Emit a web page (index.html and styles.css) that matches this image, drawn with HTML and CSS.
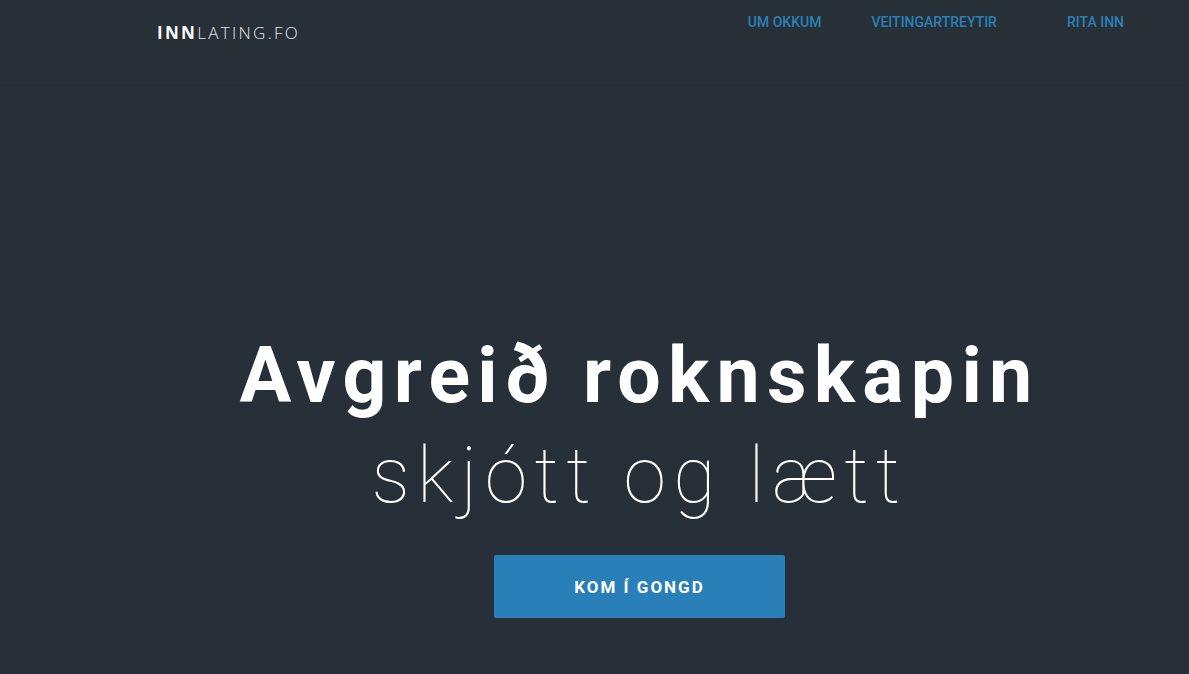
FILE: index.html
```html
<!DOCTYPE html>
<html lang="fo">
<head>
    <meta charset="UTF-8">
    <meta name="viewport" content="width=device-width, initial-scale=1.0">
    <title>Innlating.fo</title>
    <link rel="stylesheet" href="styles.css">
</head>
<body>
    <header class="topbar">
        <a class="logo" href="#"><strong>INN</strong>LATING.FO</a>
        <nav class="menu">
            <a href="#" class="menu-item">UM OKKUM</a>
            <a href="#" class="menu-item">VEITINGARTREYTIR</a>
            <a href="#" class="menu-item">RITA INN</a>
        </nav>
    </header>

    <section class="hero">
        <h1 class="hero-title">Avgreið roknskapin</h1>
        <p class="hero-sub">skjótt og lætt</p>
        <a href="#" class="hero-button">KOM Í GONGD</a>
    </section>
</body>
</html>
```

FILE: styles.css
```css
body {
    margin: 0;
    background-color: #272f38;
    color: #fff;
    font-family: Roboto, "Liberation Sans", sans-serif;
    height: 674px;
    overflow: hidden;
}
a {
    text-decoration: none;
}
.topbar {
    height: 80px;
    border-bottom: 1px solid #242b33;
    background-color: #272f37;
    display: flex;
    align-items: flex-start;
    padding: 0 0 0 157px;
}
.logo {
    margin-top: 21px;
    color: #e4e6e8;
    font-family: "Open Sans", sans-serif;
    font-weight: 300;
    font-size: 17px;
    letter-spacing: 2.3px;
}
.logo strong {
    font-weight: 700;
    color: #fff;
}
.menu {
    margin-left: auto;
    display: flex;
    padding-top: 14px;
    padding-right: 65px;
}
.menu-item {
    color: #2980b9;
    font-size: 14px;
    font-weight: 500;
    margin-left: 50px;
}
.menu-item:last-child {
    margin-left: 70px;
}
.hero {
    display: flex;
    flex-direction: column;
    align-items: center;
    padding: 0 0 0 90px;
}
.hero-title {
    margin: 245px 0 0;
    font-size: 77px;
    font-weight: 700;
    letter-spacing: 7.3px;
    line-height: 100px;
}
.hero-sub {
    margin: 0;
    font-size: 77px;
    font-weight: 100;
    letter-spacing: 7.3px;
    line-height: 100px;
}
.hero-button {
    margin-top: 29px;
    width: 291px;
    height: 63px;
    display: flex;
    align-items: center;
    justify-content: center;
    background-color: #2980b9;
    border-radius: 2px;
    color: #fff;
    font-size: 17px;
    font-weight: 700;
    letter-spacing: 2px;
}
```
